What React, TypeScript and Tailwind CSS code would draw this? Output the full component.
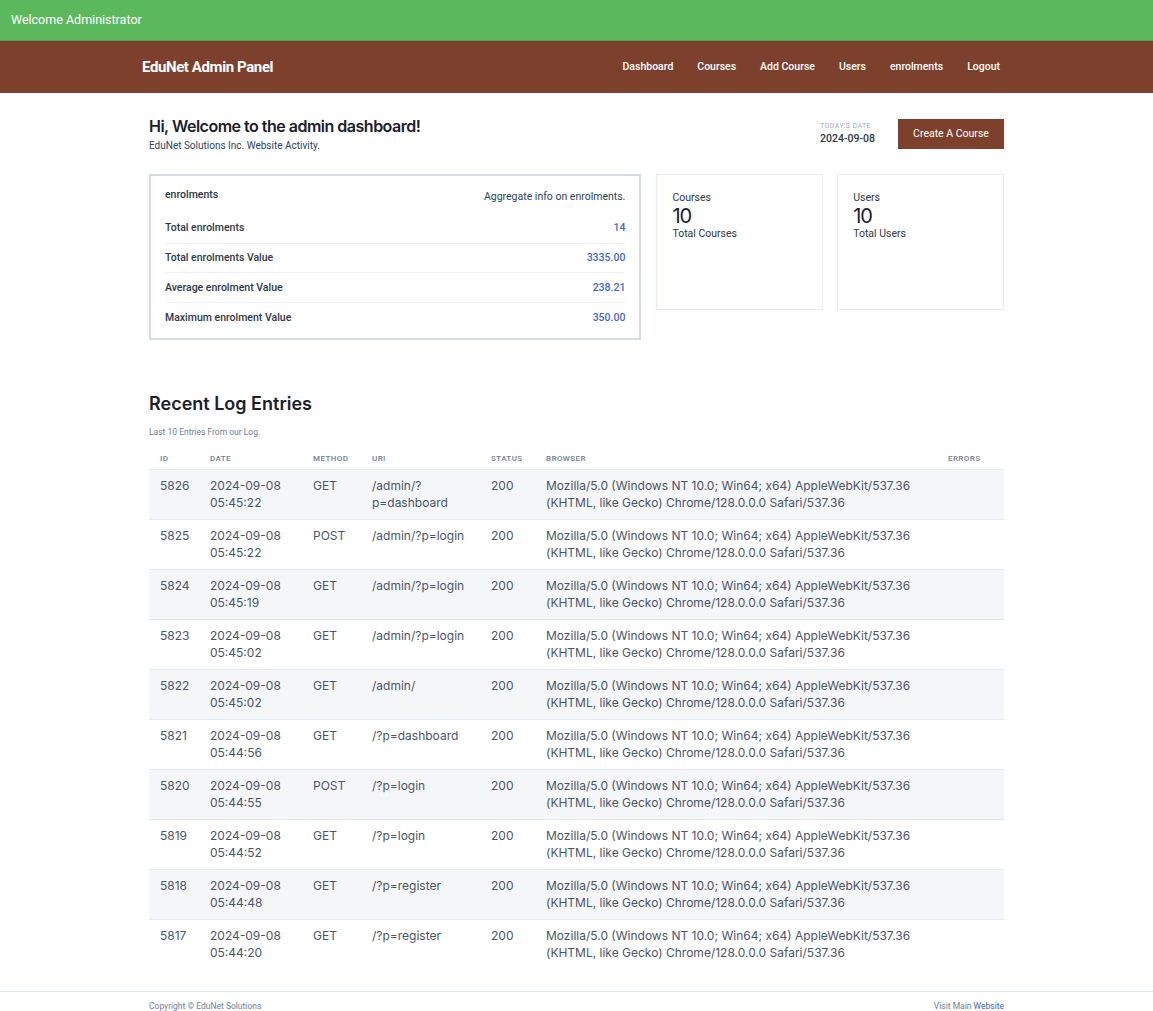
const rows = [
  ["5826", "05:45:22", "GET", "/admin/?p=dashboard"],
  ["5825", "05:45:22", "POST", "/admin/?p=login"],
  ["5824", "05:45:19", "GET", "/admin/?p=login"],
  ["5823", "05:45:02", "GET", "/admin/?p=login"],
  ["5822", "05:45:02", "GET", "/admin/"],
  ["5821", "05:44:56", "GET", "/?p=dashboard"],
  ["5820", "05:44:55", "POST", "/?p=login"],
  ["5819", "05:44:52", "GET", "/?p=login"],
  ["5818", "05:44:48", "GET", "/?p=register"],
  ["5817", "05:44:20", "GET", "/?p=register"],
];
const stats = [
  ["Total enrolments", "14"],
  ["Total enrolments Value", "3335.00"],
  ["Average enrolment Value", "238.21"],
  ["Maximum enrolment Value", "350.00"],
];
const nav = ["Dashboard", "Courses", "Add Course", "Users", "enrolments", "Logout"];
const th = "px-[11px] h-[20px] text-left text-[8px] font-medium tracking-[0.05em] text-[#718096] uppercase font-['Roboto',sans-serif]";
const td = "px-[11px] pt-[7px] pb-[7px] align-top";

export default function App() {
  return (
    <div className="w-full min-h-[1011px] bg-white font-['Roboto',sans-serif] text-[#1a202c]">
      <div className="h-[41px] bg-[#5cb85c] border-b border-[#4f9f4f] flex items-center pl-[11px] text-[12.5px] text-white">
        Welcome Administrator
      </div>
      <div className="h-[52px] bg-[#7d402c] flex items-center justify-between pl-[142px] pr-[153px]">
        <div className="text-[15px] font-bold tracking-[-0.4px] text-white">EduNet Admin Panel</div>
        <div className="flex gap-[24px] text-[10.5px] font-medium text-white">
          {nav.map((n) => <span key={n}>{n}</span>)}
        </div>
      </div>

      <div className="mx-[149px] pt-[24px]">
        <div className="flex justify-between items-start h-[57px]">
          <div>
            <div className="font-['Inter',sans-serif] text-[16px] leading-[17px] font-semibold tracking-[-0.5px] pt-[1px]">Hi, Welcome to the admin dashboard!</div>
            <div className="text-[10px] leading-[14px] mt-[4px] text-[#2a4365]">EduNet Solutions Inc. Website Activity.</div>
          </div>
          <div className="flex items-start gap-[23px] pt-[2px]">
            <div className="pt-[3px]">
              <div className="text-[7px] leading-[9px] tracking-[0.06em] uppercase text-[#a0aec0]">Today's Date</div>
              <div className="text-[10.5px] leading-[14px] mt-[1px] font-medium text-[#2d3748]">2024-09-08</div>
            </div>
            <div className="w-[106px] h-[30px] bg-[#7d402c] flex items-center justify-center text-[10.5px] text-white">Create A Course</div>
          </div>
        </div>

        <div className="flex items-start">
          <div className="w-[493px] h-[166px] border-2 border-[#d6dbe2] px-[14px] pt-[8px] flex flex-col">
            <div className="flex justify-between h-[30px]">
              <span className="text-[10.5px] leading-[22px] font-medium text-[#2d3748]">enrolments</span>
              <span className="text-[10.5px] leading-[26px] text-[#2a4365]">Aggregate info on enrolments.</span>
            </div>
            {stats.map(([k, v], i) => (
              <div key={k} className={`flex justify-between items-center h-[29.7px] text-[10.5px] font-medium ${i < 3 ? "border-b border-[#edf2f7]" : ""}`}>
                <span className="text-[#2d3748]">{k}</span>
                <span className="text-[#3f66d4]">{v}</span>
              </div>
            ))}
          </div>
          <div className="w-[167px] h-[136px] ml-[15px] border border-[#e8ebef] pl-[15px] pt-[16px]">
            <div className="text-[10.5px] leading-[14px] text-[#2d3748]">Courses</div>
            <div className="font-['Inter',sans-serif] text-[20px] leading-[24px] tracking-[-1px] -mt-[1px] font-normal">10</div>
            <div className="text-[10.5px] leading-[12px] text-[#2d3748]">Total Courses</div>
          </div>
          <div className="w-[167px] h-[136px] ml-[14px] border border-[#e8ebef] pl-[15px] pt-[16px]">
            <div className="text-[10.5px] leading-[14px] text-[#2d3748]">Users</div>
            <div className="font-['Inter',sans-serif] text-[20px] leading-[24px] tracking-[-1px] -mt-[1px] font-normal">10</div>
            <div className="text-[10.5px] leading-[12px] text-[#2d3748]">Total Users</div>
          </div>
        </div>

        <div className="mt-[52px] font-['Inter',sans-serif] text-[18px] leading-[24px] font-semibold">Recent Log Entries</div>
        <div className="mt-[10px] text-[8.5px] leading-[12px] text-[#718096]">Last 10 Entries From our Log.</div>

        <table className="mt-[11px] w-[855px] table-fixed border-collapse font-['Inter',sans-serif] text-[12px] leading-[17.5px] text-[#4a5568]">
          <colgroup>
            <col className="w-[50px]" /><col className="w-[103px]" /><col className="w-[59px]" /><col className="w-[119px]" /><col className="w-[55px]" /><col className="w-[402px]" /><col className="w-[67px]" />
          </colgroup>
          <thead>
            <tr>
              <th className={th}>ID</th><th className={th}>Date</th><th className={th}>Method</th><th className={th}>URI</th><th className={th}>Status</th><th className={th}>Browser</th><th className={th}>Errors</th>
            </tr>
          </thead>
          <tbody>
            {rows.map(([id, t, m, u], i) => (
              <tr key={id} className={`h-[49px] border-t border-[#e2e8f0] ${i % 2 === 0 ? "bg-[#f5f6f8]" : "bg-white"}`}>
                <td className={td}>{id}</td>
                <td className={td}>2024-09-08 {t}</td>
                <td className={td}>{m}</td>
                <td className={`${td} break-words`}>{u}</td>
                <td className={td}>200</td>
                <td className={td}>Mozilla/5.0 (Windows NT 10.0; Win64; x64) AppleWebKit/537.36 (KHTML, like Gecko) Chrome/128.0.0.0 Safari/537.36</td>
                <td className={td}></td>
              </tr>
            ))}
          </tbody>
        </table>
      </div>

      <div className="mt-[22px] h-[31px] border-t border-[#e2e8f0] flex items-center justify-between px-[149px] text-[8.5px] text-[#718096]">
        <span>Copyright © EduNet Solutions</span>
        <span>Visit Main <span className="text-[#3f5fc4]">Website</span></span>
      </div>
    </div>
  );
}
